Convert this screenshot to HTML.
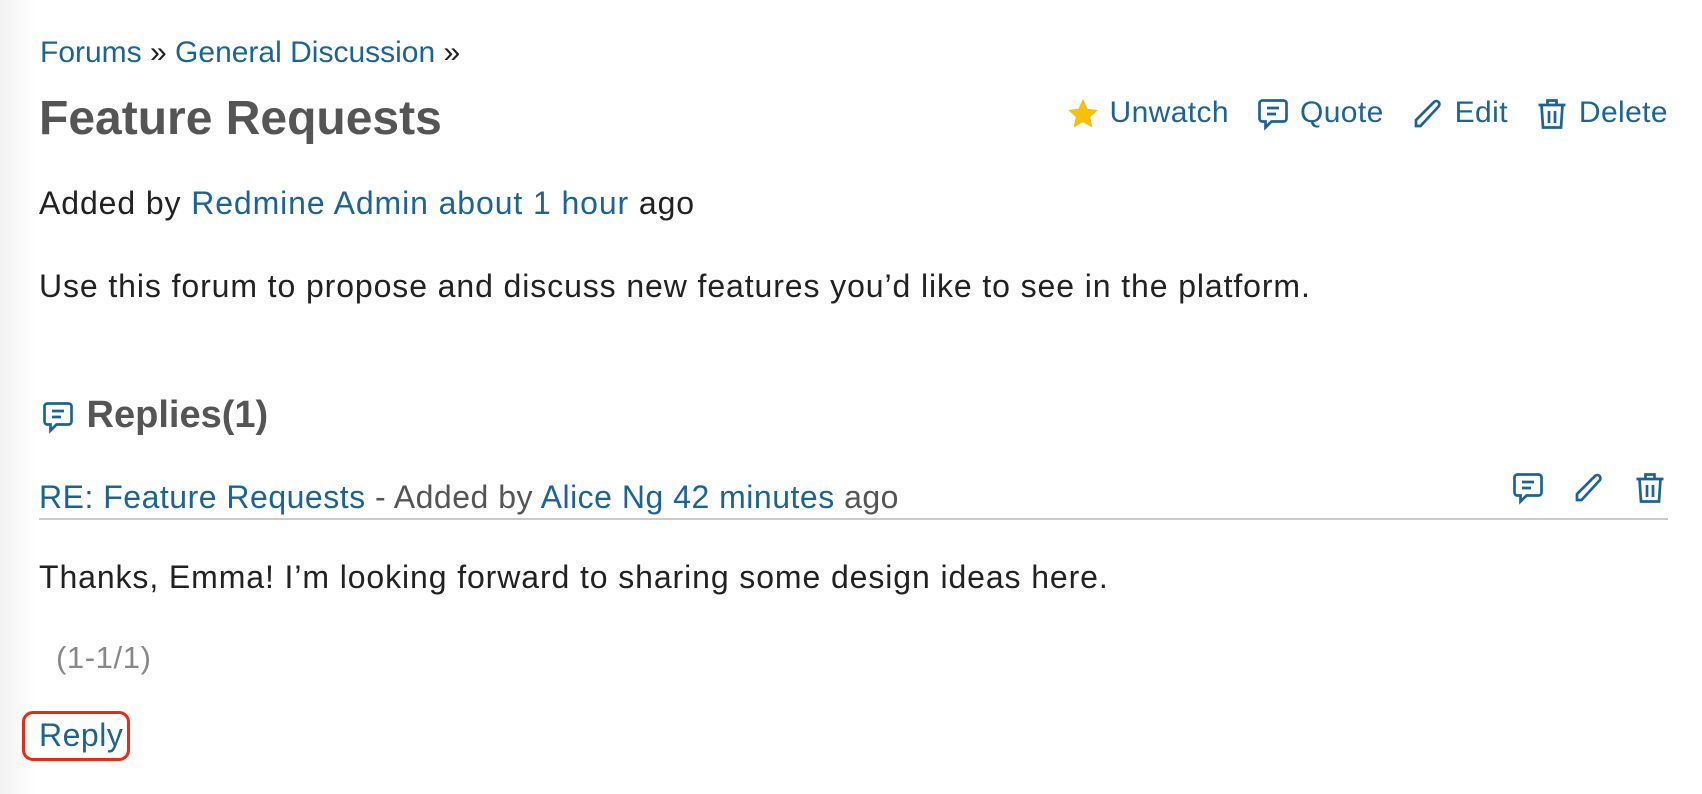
<!DOCTYPE html>
<html><head><meta charset="utf-8"><style>
body{margin:0;width:1702px;height:794px;background:#fff;font-family:"Liberation Sans",sans-serif;color:#222;position:relative;overflow:hidden}
.lg{position:absolute;left:0;top:0;width:36px;height:794px;background:linear-gradient(to right,#f2f2f2,#fff)}
a{color:#1d6496;text-decoration:none}
.t{position:absolute;white-space:nowrap;font-size:30px;line-height:1}
.b{font-size:32px;letter-spacing:0.9px}
svg{display:inline-block;vertical-align:middle}
</style></head><body>
<div class="lg"></div>
<div class="t" style="left:40px;top:38px"><a>Forums</a> » <a>General Discussion</a> »</div>
<div class="t" style="left:39px;top:95px;font-size:48px;font-weight:bold;color:#555">Feature Requests</div>
<div class="t" style="right:34px;top:96px;color:#1d6496;letter-spacing:0.4px">
<svg width="36" height="36" viewBox="0 0 24 24"><path d="M12 2l3 6.5 7 .8-5.2 4.8 1.5 7L12 17.5 5.7 21l1.5-7L2 9.3l7-.8z" fill="#f7c00a"/></svg> Unwatch&nbsp;&nbsp;
<svg width="36" height="36" viewBox="0 0 24 24" fill="none" stroke="#1d6496" stroke-width="1.8"><path d="M5 3h14a2 2 0 0 1 2 2v10a2 2 0 0 1-2 2h-8l-4 4v-4H5a2 2 0 0 1-2-2V5a2 2 0 0 1 2-2z"/><path d="M8 8h8M8 12h6"/></svg> Quote&nbsp;&nbsp;
<svg width="36" height="36" viewBox="0 0 24 24" fill="none" stroke="#1d6496" stroke-width="1.8"><path d="M4 20v-4L16 4a2 2 0 0 1 3 3L7 20z"/></svg> Edit&nbsp;&nbsp;
<svg width="36" height="36" viewBox="0 0 24 24" fill="none" stroke="#1d6496" stroke-width="1.8"><path d="M3 6h18M9 6V3h6v3M5 6l1 15h12l1-15M10 10v8M14 10v8"/></svg> Delete</div>
<div class="t b" style="left:39px;top:187px">Added by <a>Redmine Admin</a> <a>about 1 hour</a> ago</div>
<div class="t b" style="left:39px;top:270px">Use this forum to propose and discuss new features you’d like to see in the platform.</div>
<div class="t" style="left:40px;top:396px;font-size:38px;font-weight:bold;color:#555"><svg width="36" height="36" viewBox="0 0 24 24" fill="none" stroke="#1d6496" stroke-width="1.8"><path d="M5 3h14a2 2 0 0 1 2 2v10a2 2 0 0 1-2 2h-8l-4 4v-4H5a2 2 0 0 1-2-2V5a2 2 0 0 1 2-2z"/><path d="M8 8h8M8 12h6"/></svg> Replies(1)</div>
<div class="t" style="left:39px;top:481px;color:#555;font-size:32px;letter-spacing:0.5px"><a>RE: Feature Requests</a> - Added by <a>Alice Ng</a> <a>42 minutes</a> ago</div>
<div class="t" style="right:34px;top:470px">
<svg width="36" height="36" viewBox="0 0 24 24" fill="none" stroke="#1d6496" stroke-width="1.8"><path d="M5 3h14a2 2 0 0 1 2 2v10a2 2 0 0 1-2 2h-8l-4 4v-4H5a2 2 0 0 1-2-2V5a2 2 0 0 1 2-2z"/><path d="M8 8h8M8 12h6"/></svg>&nbsp;&nbsp;
<svg width="36" height="36" viewBox="0 0 24 24" fill="none" stroke="#1d6496" stroke-width="1.8"><path d="M4 20v-4L16 4a2 2 0 0 1 3 3L7 20z"/></svg>&nbsp;&nbsp;
<svg width="36" height="36" viewBox="0 0 24 24" fill="none" stroke="#1d6496" stroke-width="1.8"><path d="M3 6h18M9 6V3h6v3M5 6l1 15h12l1-15M10 10v8M14 10v8"/></svg></div>
<div style="position:absolute;left:39px;top:518px;width:1629px;height:2px;background:#ccc"></div>
<div class="t b" style="left:39px;top:561px">Thanks, Emma! I’m looking forward to sharing some design ideas here.</div>
<div class="t" style="left:56px;top:642px;color:#888;font-size:31px;letter-spacing:0.6px">(1-1/1)</div>
<div style="position:absolute;left:22px;top:711px;width:102px;height:44px;border:3px solid #ea2a12;border-radius:11px"></div>
<div class="t" style="left:39px;top:719px;font-size:32px;letter-spacing:0.5px"><a>Reply</a></div>
</body></html>
